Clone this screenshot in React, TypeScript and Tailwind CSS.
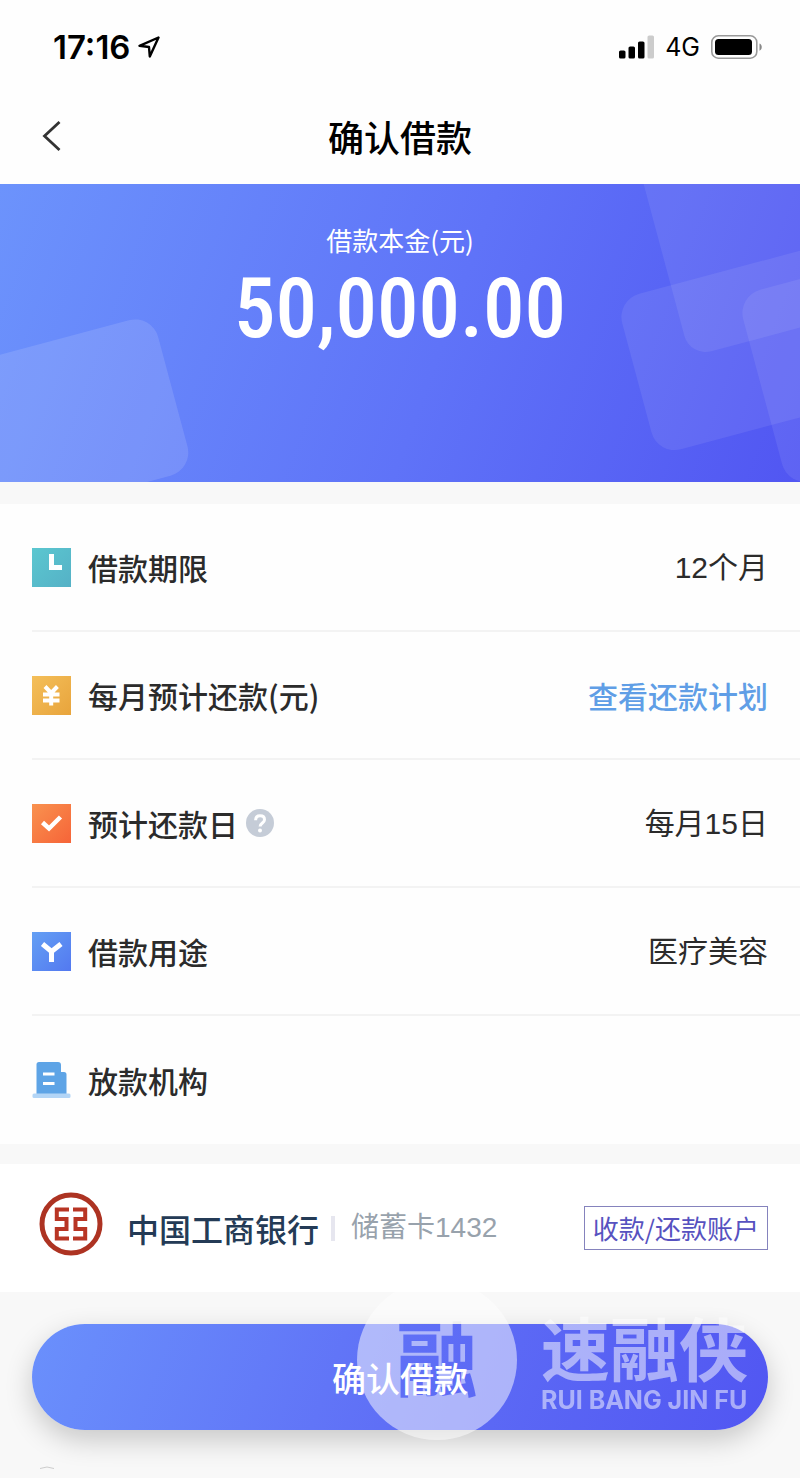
import type { ReactNode } from "react";

interface LoanRow {
  id: string;
  icon: ReactNode;
  label: string;
  value?: string;
  link?: string;
  help?: boolean;
}

function ClockIcon() {
  return (
    <svg viewBox="0 0 39 39" className="size-[39px] shrink-0" aria-hidden="true">
      <defs>
        <linearGradient id="clock" x1="0" y1="0" x2="1" y2="1">
          <stop offset="0" stopColor="#5bc7d0" />
          <stop offset="1" stopColor="#55b1c6" />
        </linearGradient>
      </defs>
      <rect width="39" height="39" fill="url(#clock)" />
      <path d="M17 6h5v11h8v5H17z" fill="#fff" />
    </svg>
  );
}

function YenIcon() {
  return (
    <svg viewBox="0 0 39 39" className="size-[39px] shrink-0" aria-hidden="true">
      <defs>
        <linearGradient id="yen" x1="0" y1="0" x2="1" y2="1">
          <stop offset="0" stopColor="#f4bf5a" />
          <stop offset="1" stopColor="#e8a43c" />
        </linearGradient>
      </defs>
      <rect width="39" height="39" fill="url(#yen)" />
      <path
        d="M13 10.5l6.2 6.5 6.2-6.5M19.2 16v13.5M11 18.5h16.5M11 24.5h16.5"
        fill="none"
        stroke="#fff"
        strokeWidth="4"
      />
    </svg>
  );
}

function CheckIcon() {
  return (
    <svg viewBox="0 0 39 39" className="size-[39px] shrink-0" aria-hidden="true">
      <defs>
        <linearGradient id="check" x1="0" y1="0" x2="1" y2="1">
          <stop offset="0" stopColor="#f9924f" />
          <stop offset="1" stopColor="#f66438" />
        </linearGradient>
      </defs>
      <rect width="39" height="39" fill="url(#check)" />
      <path d="M10.5 18.5l6.5 6 11.500-11.500" fill="none" stroke="#fff" strokeWidth="4.5" />
    </svg>
  );
}

function PurposeIcon() {
  return (
    <svg viewBox="0 0 39 39" className="size-[39px] shrink-0" aria-hidden="true">
      <defs>
        <linearGradient id="purpose" x1="0" y1="0" x2="1" y2="1">
          <stop offset="0" stopColor="#64a0f4" />
          <stop offset="1" stopColor="#5379f0" />
        </linearGradient>
      </defs>
      <rect width="39" height="39" fill="url(#purpose)" />
      <path d="M10.5 12l9 7.5L29 12M19.5 18.5V30" fill="none" stroke="#fff" strokeWidth="5" />
    </svg>
  );
}

function BuildingIcon() {
  return (
    <svg viewBox="0 0 39 39" className="size-[39px] shrink-0" aria-hidden="true">
      <path d="M7 1h19a3 3 0 013 3v7h3a2.5 2.5 0 012.5 2.5V34h-30V3.500A2.500 2.500 0 017 1z" fill="#5ea4e6" />
      <rect x="0.5" y="32.5" width="38" height="4.5" rx="1.5" fill="#b3d5f6" />
      <path d="M11 13h11.5M11 22.5h11.5" stroke="#fff" strokeWidth="3.2" />
    </svg>
  );
}

function HelpIcon() {
  return (
    <svg viewBox="0 0 28 28" className="size-7" aria-hidden="true">
      <circle cx="14" cy="14" r="14" fill="#c5ccd7" />
      <path
        d="M9.600 11.200c0-2.800 1.800-4.400 4.500-4.400s4.400 1.600 4.400 3.900c0 3.300-4.400 3.200-4.400 6.800"
        fill="none"
        stroke="#fff"
        strokeWidth="3"
      />
      <circle cx="14" cy="21.5" r="2" fill="#fff" />
    </svg>
  );
}

function BankLogo() {
  return (
    <svg viewBox="-32 -32 64 64" className="size-16 shrink-0" role="img" aria-label="中国工商银行">
      <circle r="29" fill="none" stroke="#ad3322" strokeWidth="5" />
      <path
        d="M-2-14.5H-14.2V-5H-4.500V5H-14.200V14.500H-2M2-14.500H14.200V-5H4.500V5H14.200V14.500H2"
        fill="none"
        stroke="#b83524"
        strokeWidth="4"
      />
    </svg>
  );
}

function StatusBar() {
  return (
    <div className="flex h-[92px] items-center justify-between pt-[2px] pr-[37px] pl-[53px] text-black">
      <div className="flex items-center gap-2">
        <span className="font-[Inter,sans-serif] text-[33px] leading-10 font-semibold">17:16</span>
        <svg viewBox="0 0 22 22" className="size-[22px]" aria-hidden="true">
          <path d="M20.5 1.5l-19 8.300 9.500 1.200.8 9.500z" fill="none" stroke="#000" strokeWidth="2.4" strokeLinejoin="round" />
        </svg>
      </div>
      <div className="flex items-center gap-[11px]">
        <svg viewBox="0 0 35 24" className="h-6 w-[35px]" aria-hidden="true">
          <rect x="0" y="15.5" width="6.5" height="8" rx="1.6" />
          <rect x="9.5" y="11.5" width="6.5" height="12" rx="1.6" />
          <rect x="19" y="6.5" width="6.5" height="17" rx="1.6" />
          <rect x="28.5" y="0.5" width="6.5" height="23" rx="1.6" fill="#ccc" />
        </svg>
        <span className="font-[Inter,sans-serif] text-[25px] leading-10">4G</span>
        <svg viewBox="0 0 52 24" className="h-6 w-[52px]" aria-hidden="true">
          <rect x="0.8" y="0.8" width="45" height="22.4" rx="6.5" fill="none" stroke="#999" strokeWidth="1.6" />
          <rect x="4" y="4" width="37" height="16" rx="3.5" />
          <path d="M48.5 8.500c3 1.200 3 6 0 7.200z" fill="#888" />
        </svg>
      </div>
    </div>
  );
}

const rows: LoanRow[] = [
  { id: "term", icon: <ClockIcon />, label: "借款期限", value: "12个月" },
  { id: "monthly", icon: <YenIcon />, label: "每月预计还款(元)", link: "查看还款计划" },
  { id: "date", icon: <CheckIcon />, label: "预计还款日", value: "每月15日", help: true },
  { id: "purpose", icon: <PurposeIcon />, label: "借款用途", value: "医疗美容" },
  { id: "lender", icon: <BuildingIcon />, label: "放款机构" },
];

export default function App() {
  return (
    <div className="min-h-screen overflow-hidden bg-[#f8f8f8] font-['Noto_Sans_CJK_SC',sans-serif] text-[#2b2b2b]">
      <header className="bg-[#fefefe]">
        <StatusBar />
        <div className="grid h-[92px] grid-cols-[1fr_auto_1fr] items-center px-10 pb-1">
          <button type="button" aria-label="返回" className="justify-self-start">
            <svg viewBox="0 0 24 32" className="h-8 w-6" aria-hidden="true">
              <path d="M19.5 2l-15 14 15 14" fill="none" stroke="#333" strokeWidth="2.8" />
            </svg>
          </button>
          <h1 className="text-4xl font-medium text-black">确认借款</h1>
        </div>
      </header>

      <section className="relative h-[298px] bg-[linear-gradient(110deg,#6c93fc,#5f73f8_55%,#5156f2)] pt-9 text-center text-white">
        <svg
          viewBox="0 0 800 298"
          preserveAspectRatio="xMidYMid slice"
          className="absolute inset-0 size-full"
          fill="#fff"
          aria-hidden="true"
        >
          <rect x="-200" width="200" height="161" rx="24" transform="translate(152 130) rotate(-15)" opacity="0.12" />
          <rect y="-250" width="250" height="250" rx="22" transform="translate(690 173) rotate(-15)" opacity="0.08" />
          <rect width="250" height="161" rx="24" transform="translate(616 116) rotate(-15)" opacity="0.08" />
          <rect width="200" height="198" rx="24" transform="translate(737 112) rotate(-15)" opacity="0.08" />
        </svg>
        <p className="relative text-[26px] leading-10">借款本金(元)</p>
        <p className="relative font-['Roboto_Condensed','Roboto',sans-serif] text-[83px] leading-[98px] font-medium">
          50,000.00
        </p>
      </section>

      <ul className="mt-[22px] bg-[#fefefe] pl-8">
        {rows.map((row) => (
          <li
            key={row.id}
            className="flex h-32 items-center border-b-2 border-[#f3f3f3] pr-8 text-[30px] last:border-b-0"
          >
            {row.icon}
            <span className="ml-[17px] font-medium">{row.label}</span>
            {row.help && (
              <button type="button" aria-label="还款日说明" className="ml-2">
                <HelpIcon />
              </button>
            )}
            {row.value && (
              <span className="ml-auto font-['Liberation_Sans','Noto_Sans_CJK_SC',sans-serif]">{row.value}</span>
            )}
            {row.link && (
              <a href="#plan" className="ml-auto font-medium text-[#609ee6]">
                {row.link}
              </a>
            )}
          </li>
        ))}
      </ul>

      <section className="mt-5 flex h-32 gap-6 bg-white pt-7 pr-8 pl-[39px]">
        <BankLogo />
        <div className="flex h-[72px] flex-1 items-center">
          <span className="text-[32px] font-medium text-[#243b56]">中国工商银行</span>
          <span className="mx-3 h-[25px] w-1 bg-[#e6e6ef]" />
          <span className="ml-1 font-['Liberation_Sans','Noto_Sans_CJK_SC',sans-serif] text-[28px] text-[#98a2ac]">
            储蓄卡1432
          </span>
          <button
            type="button"
            className="ml-auto h-[44px] border border-[#8583bd] px-2 text-[26px] leading-10 text-[#5752c0]"
          >
            收款/还款账户
          </button>
        </div>
      </section>

      <footer className="relative px-8 pt-8">
        <button
          type="button"
          className="h-[106px] w-full rounded-full bg-[linear-gradient(110deg,#6a90fc,#5f6ff6_50%,#5156f2)] text-[34px] font-medium text-white shadow-[0_10px_28px_rgba(0,0,0,0.2)]"
        >
          确认借款
        </button>
        <div className="pointer-events-none absolute top-[-12px] left-[357px] flex items-center gap-6 text-white opacity-50">
          <svg viewBox="0 0 160 160" className="size-40 shrink-0">
            <mask id="seal">
              <circle cx="80" cy="80" r="80" fill="#fff" />
              <text
                x="80"
                y="110"
                textAnchor="middle"
                fontSize="82"
                fontWeight="700"
                fill="#000"
              >
                融
              </text>
            </mask>
            <rect width="160" height="160" fill="#fff" mask="url(#seal)" />
          </svg>
          <div className="whitespace-nowrap">
            <p className="text-[69px] leading-[80px] font-bold">速融侠</p>
            <p className="font-[Inter,sans-serif] text-[25px] leading-7 font-bold">RUI BANG JIN FU</p>
          </div>
        </div>
        <div className="h-12 px-2 pt-9">
          <svg viewBox="0 0 14 3" className="h-[3px] w-[14px]" aria-hidden="true">
            <path d="M0 2.5Q7-0.500 14 2.500" fill="none" stroke="#ccc" />
          </svg>
        </div>
      </footer>
    </div>
  );
}
